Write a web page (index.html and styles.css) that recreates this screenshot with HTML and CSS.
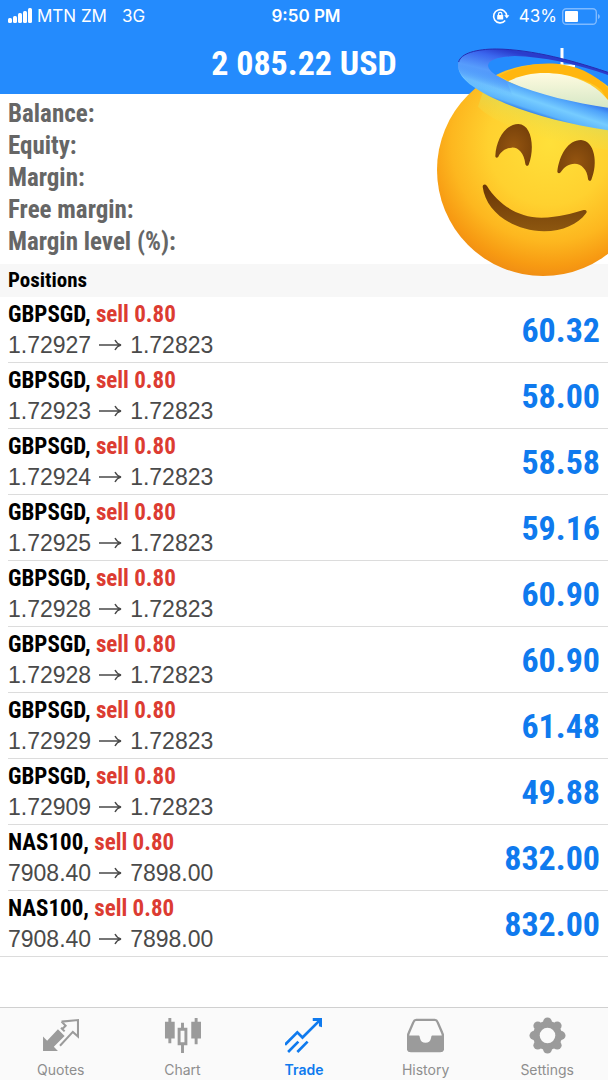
FILE: index.html
```html
<!DOCTYPE html>
<html lang="en">
<head>
    <meta charset="UTF-8">
    <meta name="viewport" content="width=device-width, initial-scale=1.0">
    <title>Trade</title>
    <link rel="stylesheet" href="styles.css">
</head>
<body>
    <header class="header">
        <div class="status-bar">
            <div class="carrier">
                <svg class="signal" viewBox="0 0 24 16" fill="#fff">
                    <rect x="0" y="10" width="4" height="5" rx="1.5"/>
                    <rect x="5" y="8" width="4" height="7" rx="1.5"/>
                    <rect x="10" y="5" width="4" height="10" rx="1.5"/>
                    <rect x="15" y="3" width="4" height="12" rx="1.5"/>
                    <rect x="20" y="0" width="4" height="15" rx="1.5"/>
                </svg>
                <span>MTN ZM</span>
                <span class="network">3G</span>
            </div>
            <div class="time">9:50 PM</div>
            <div class="battery">
                <svg class="lock" viewBox="0 0 18 16" fill="none" stroke="#fff" stroke-width="1.6">
                    <path d="M13.2 12.6A6.6 6.6 0 1 1 14.8 8"/>
                    <path d="M12.2 7.2h5.2l-2.6 3.4z" fill="#fff" stroke="none"/>
                    <rect x="5.2" y="7" width="6" height="4.6" rx="0.6" fill="#fff" stroke="none"/>
                    <path d="M6.5 7.4V6a1.7 1.7 0 0 1 3.4 0v1.4" stroke-width="1.2"/>
                </svg>
                <span>43%</span>
                <svg class="battery-icon" viewBox="0 0 38 17">
                    <rect x="0.7" y="0.7" width="33.6" height="15.6" rx="3.5" fill="none" stroke="#7fbaff" stroke-width="1.4"/>
                    <rect x="3" y="3" width="13" height="11" rx="1" fill="#fff"/>
                    <path d="M36 6v5c1.3-.5 1.8-1.5 1.8-2.5S37.3 6.5 36 6z" fill="#7fbaff"/>
                </svg>
            </div>
        </div>
        <div class="title-bar">
            <h1>2 085.22 USD</h1>
            <button class="add" aria-label="New order">
                <svg viewBox="0 0 30 38" stroke="#fff" stroke-width="3"><path d="M15 4v30M2 22h26"/></svg>
            </button>
        </div>
    </header>

    <!-- sticker over the account figures -->
    <svg class="emoji" viewBox="0 0 540 735" aria-hidden="true">
        <defs>
            <radialGradient id="face" gradientUnits="userSpaceOnUse" cx="365" cy="310" r="410">
                <stop offset="0" stop-color="#ffe03a"/>
                <stop offset="0.45" stop-color="#ffd12f"/>
                <stop offset="0.72" stop-color="#fdb71f"/>
                <stop offset="0.9" stop-color="#f79a12"/>
                <stop offset="1" stop-color="#ef8b14"/>
            </radialGradient>
            <linearGradient id="front" gradientUnits="userSpaceOnUse" x1="345" y1="145" x2="317" y2="229">
                <stop offset="0" stop-color="#3a80f0"/>
                <stop offset="0.15" stop-color="#4ea2fa"/>
                <stop offset="0.5" stop-color="#76ccff"/>
                <stop offset="0.8" stop-color="#5cb4fc"/>
                <stop offset="0.92" stop-color="#347ee8"/>
                <stop offset="1" stop-color="#2560cc"/>
            </linearGradient>
            <linearGradient id="back" gradientUnits="userSpaceOnUse" x1="210" y1="25" x2="180" y2="150">
                <stop offset="0" stop-color="#2a3ccc"/>
                <stop offset="0.2" stop-color="#3a66ee"/>
                <stop offset="0.55" stop-color="#579dfc"/>
                <stop offset="1" stop-color="#4c92fb" stop-opacity="0"/>
            </linearGradient>
            <linearGradient id="shine" x1="0" y1="0" x2="0" y2="1">
                <stop offset="0" stop-color="#fffbe0"/>
                <stop offset="1" stop-color="#d3e6c4"/>
            </linearGradient>
            <linearGradient id="glow" gradientUnits="userSpaceOnUse" x1="330" y1="205" x2="300" y2="305">
                <stop offset="0" stop-color="#dcdc58" stop-opacity="0.7"/>
                <stop offset="1" stop-color="#ffe03a" stop-opacity="0"/>
            </linearGradient>
            <radialGradient id="eye" cx="0.5" cy="0.55" r="0.6">
                <stop offset="0" stop-color="#955510"/>
                <stop offset="1" stop-color="#75400a"/>
            </radialGradient>
            <linearGradient id="mouth" x1="0" y1="0" x2="0" y2="1">
                <stop offset="0" stop-color="#693505"/>
                <stop offset="1" stop-color="#8d5710"/>
            </linearGradient>
        </defs>
        <circle cx="345" cy="390" r="318" fill="url(#face)"/>
        <path d="M165 155C260 205 420 245 540 262V330C400 310 220 270 150 200z" fill="url(#glow)"/>
        <path d="M215 107C310 55 460 50 545 150V190L520 150C450 90 300 90 245 125z" fill="#ffb60f"/>
        <path d="M240 124C290 98 350 94 400 103C470 116 510 145 540 180V210C440 195 330 170 240 124z" fill="url(#shine)"/>
        <path fill-rule="evenodd" d="M90 75C92 42 140 27 205 27C310 28 440 62 560 104V273C420 256 280 214 195 174C130 142 90 112 90 75zM180 78C184 96 205 107 235 122C340 168 450 190 560 206V112C460 75 350 50 260 48C210 50 180 60 180 78z" fill="url(#front)"/>
        <path fill-rule="evenodd" d="M90 75C92 42 140 27 205 27C310 28 440 62 560 104V112C460 75 350 50 260 48C210 50 180 60 180 78C184 96 205 107 235 122L270 205C160 160 90 117 90 75z" fill="url(#back)"/>
        <path d="M92 66C98 40 145 27 205 27C310 28 440 62 560 104" fill="none" stroke="#262bb0" stroke-width="3"/>
        <path d="M202 348C204 300 232 252 271 252C310 253 322 320 302 374C299 380 293 378 292 371C288 339 270 321 251 323C232 324 218 336 211 350C207 355 202 353 202 348z" fill="url(#eye)"/>
        <path d="M388 394C394 345 420 300 459 300C500 302 511 370 490 419C487 425 481 423 480 416C478 389 460 371 440 371C421 371 407 383 398 397C394 402 388 400 388 394z" fill="url(#eye)"/>
        <path d="M164 440C165 432 172 432 177 438C210 493 270 532 340 533C394 533 430 520 464 511C474 508 480 514 473 521C450 551 405 574 348 574C255 573 173 515 164 440z" fill="url(#mouth)"/>
    </svg>

    <main class="content">
        <ul class="summary">
            <li>Balance:</li>
            <li>Equity:</li>
            <li>Margin:</li>
            <li>Free margin:</li>
            <li>Margin level (%):</li>
        </ul>
        <h2 class="section-title">Positions</h2>
        <ul class="positions" id="positions"></ul>
    </main>

    <nav class="tabs">
        <a href="#quotes" class="tab">
            <svg viewBox="0 0 36 36">
                <path d="M1 33V19l4 4L15.5 12l6.5 6.5L11.5 29l4 4z" fill="#9b9b9b"/>
                <path d="M18.5 10.5L22 14M19 4.5L35 3v16l-5-4.5L17.5 28M19 4.5l4 4-3 3" fill="none" stroke="#9b9b9b" stroke-width="2"/>
            </svg>
            <span>Quotes</span>
        </a>
        <a href="#chart" class="tab">
            <svg viewBox="0 0 38 36" fill="#9b9b9b">
                <path d="M4.5 0h3v4H11v17H7.5v5h-3v-5H1V4h3.5zM31.5 0h3v4H38v17h-3.5v6h-3v-6H28V4h3.5z"/>
                <path fill-rule="evenodd" d="M17.5 5h3v5H24v18h-3.5v8h-3v-8H14V10h3.5zM17 13v12h4V13z"/>
            </svg>
            <span>Chart</span>
        </a>
        <a href="#trade" class="tab active">
            <svg viewBox="0 0 36 36" fill="none" stroke="#0f7aee" stroke-width="2.6">
                <path d="M0 27L12 15l5 5L34 3M3 34l10-10M12 34l10-10"/>
                <path d="M27 1h9v9l-3-1V4h-6z" fill="#0f7aee" stroke="none"/>
            </svg>
            <span>Trade</span>
        </a>
        <a href="#history" class="tab">
            <svg viewBox="0 0 38 36">
                <path d="M9.5 2h19q2 0 2.8 2L36 15q1 2 1 4v12q0 3-3 3H4q-3 0-3-3V19q0-2 1-4L6.7 4q.8-2 2.8-2z" fill="none" stroke="#9b9b9b" stroke-width="2.4"/>
                <path d="M1 18h11c1 0 1 1 1.3 2.5C14 24 16 25.5 19 25.5s5-1.5 5.7-5C25 19 25 18 26 18h11v13q0 4-4 4H5q-4 0-4-4z" fill="#9b9b9b"/>
            </svg>
            <span>History</span>
        </a>
        <a href="#settings" class="tab">
            <svg viewBox="0 0 38 38">
                <g fill="#9b9b9b">
                    <circle cx="19" cy="19" r="15"/>
                    <circle cx="19" cy="5" r="4.5"/>
                    <circle cx="29" cy="9" r="4.5"/>
                    <circle cx="33" cy="19" r="4.5"/>
                    <circle cx="29" cy="29" r="4.5"/>
                    <circle cx="19" cy="33" r="4.5"/>
                    <circle cx="9" cy="29" r="4.5"/>
                    <circle cx="5" cy="19" r="4.5"/>
                    <circle cx="9" cy="9" r="4.5"/>
                </g>
                <circle cx="19" cy="19" r="8" fill="#fafafa"/>
            </svg>
            <span>Settings</span>
        </a>
    </nav>

    <script>
        const positions = [
            ['GBPSGD', '1.72927', '1.72823', '60.32'],
            ['GBPSGD', '1.72923', '1.72823', '58.00'],
            ['GBPSGD', '1.72924', '1.72823', '58.58'],
            ['GBPSGD', '1.72925', '1.72823', '59.16'],
            ['GBPSGD', '1.72928', '1.72823', '60.90'],
            ['GBPSGD', '1.72928', '1.72823', '60.90'],
            ['GBPSGD', '1.72929', '1.72823', '61.48'],
            ['GBPSGD', '1.72909', '1.72823', '49.88'],
            ['NAS100', '7908.40', '7898.00', '832.00'],
            ['NAS100', '7908.40', '7898.00', '832.00']
        ];

        document.getElementById('positions').innerHTML = positions.map(([symbol, open, current, profit]) => `
            <li class="position">
                <div>
                    <div class="symbol">${symbol}, <span class="sell">sell 0.80</span></div>
                    <div class="prices">
                        <span>${open}</span>
                        <svg class="arrow" viewBox="0 0 23 12" fill="none" stroke="#4a4a4a" stroke-width="1.4"><path d="M0 6h22M16 1q2 4 6 5q-4 1-6 5"/></svg>
                        <span>${current}</span>
                    </div>
                </div>
                <div class="profit">${profit}</div>
            </li>
        `).join('');
    </script>
</body>
</html>
```
FILE: styles.css
```css
* {
    box-sizing: border-box;
}
body {
    margin: 0;
    min-height: 100vh;
    display: flex;
    flex-direction: column;
    position: relative;
    overflow-x: hidden;
    background-color: #fff;
    font-family: "Roboto Condensed", "Arial Narrow", sans-serif;
}
h1, h2, ul {
    margin: 0;
    padding: 0;
    list-style: none;
}
.header {
    background-color: #248bfd;
    color: #fff;
}
.status-bar {
    display: grid;
    grid-template-columns: 1fr auto 1fr;
    align-items: center;
    height: 32px;
    padding: 0 8px;
    font-family: Inter, sans-serif;
    font-size: 17px;
}
.carrier, .battery {
    display: flex;
    align-items: center;
    gap: 5px;
}
.signal {
    width: 24px;
    height: 16px;
}
.network {
    margin-left: 10px;
}
.time {
    padding-left: 4px;
    font-weight: 600;
}
.battery {
    justify-content: flex-end;
}
.lock {
    width: 18px;
    height: 16px;
    margin-right: 4px;
}
.battery-icon {
    width: 38px;
    height: 17px;
}
.title-bar {
    display: grid;
    grid-template-columns: 1fr auto 1fr;
    align-items: center;
    height: 62px;
    padding: 0 31px;
}
.title-bar h1 {
    grid-column: 2;
    font-size: 34px;
    line-height: 60px;
}
.add {
    justify-self: end;
    width: 30px;
    height: 38px;
    padding: 0;
    border: none;
    background: none;
}
.add svg {
    display: block;
}
.emoji {
    position: absolute;
    top: 40px;
    right: 0;
    width: 180px;
    height: 245px;
}
.content {
    flex: 1;
}
.summary {
    padding: 4px 8px 6px;
    color: #666;
    font-size: 25px;
    font-weight: bold;
    line-height: 32px;
}
.section-title {
    padding: 0 8px;
    background-color: #f7f7f7;
    font-size: 21px;
    line-height: 33px;
}
.position {
    display: flex;
    justify-content: space-between;
    align-items: center;
    height: 66px;
    margin-left: 8px;
    padding-right: 8px;
    border-bottom: 1px solid #dcdcdc;
}
.position:last-child {
    margin-left: 0;
    padding-left: 8px;
}
.symbol {
    font-size: 23px;
    font-weight: bold;
    line-height: 32px;
}
.sell {
    color: #dc3c32;
}
.prices {
    display: flex;
    align-items: center;
    gap: 8px;
    padding-bottom: 2px;
    color: #4a4a4a;
    font-family: "Liberation Sans", sans-serif;
    font-size: 23px;
    line-height: 28px;
}
.arrow {
    width: 23px;
    height: 12px;
}
.profit {
    color: #0f7aee;
    font-size: 34px;
    font-weight: bold;
}
.tabs {
    display: grid;
    grid-template-columns: repeat(5, 1fr);
    height: 73px;
    border-top: 1px solid #d0d0d0;
    background-color: #fafafa;
}
.tab {
    display: flex;
    flex-direction: column;
    align-items: center;
    padding-top: 9px;
    color: #8e8e8e;
    font-family: Inter, sans-serif;
    font-size: 14px;
    line-height: 32px;
    text-decoration: none;
}
.tab svg {
    width: 37px;
    height: 37px;
}
.active {
    color: #0f7aee;
    font-weight: 600;
}
```
